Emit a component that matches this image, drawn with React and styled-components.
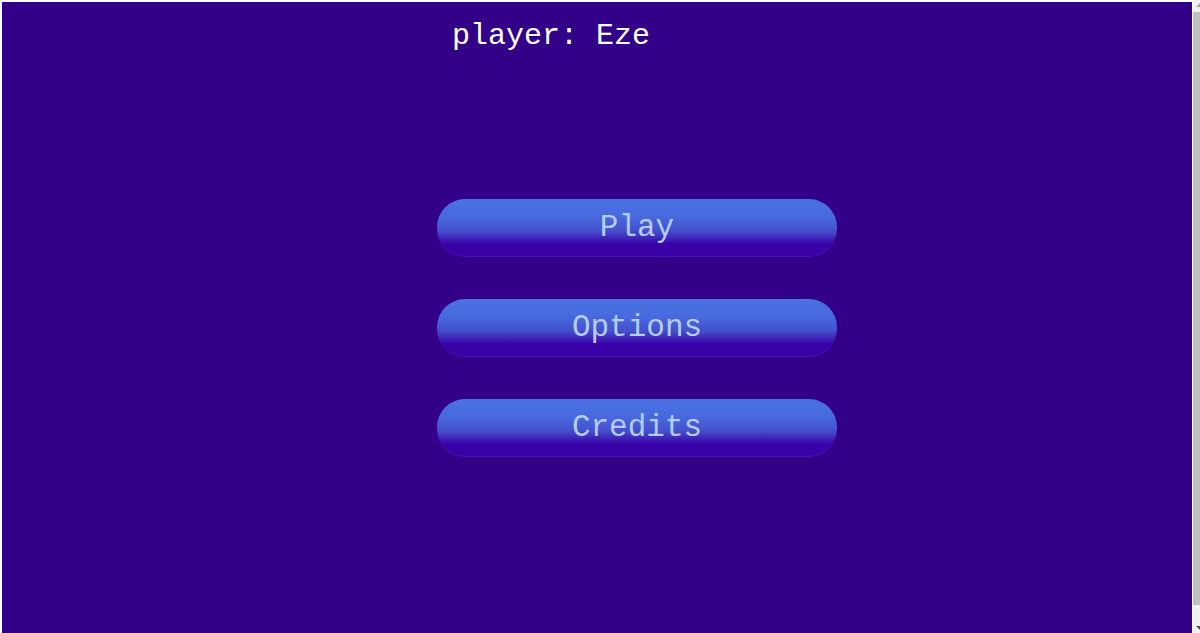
import React from "react";
import styled, { createGlobalStyle } from "styled-components";

const Global = createGlobalStyle`
  html, body { background: #ffffff; }
  body {
    margin: 2px 8px 0 2px;
    font-family: "Liberation Mono", "Courier New", monospace;
    overflow: hidden;
  }
`;

const Screen = styled.div`
  background: #330088;
  height: calc(100vh - 2px);
  display: flex;
  flex-direction: column;
`;

const Header = styled.header`
  padding: 16px 0 0 450px;
  height: 40px;
`;

const PlayerName = styled.span`
  color: #ffffff;
  font-family: "Liberation Mono", "Courier New", monospace;
  font-size: 30px;
  line-height: 36px;
`;

const Menu = styled.nav`
  display: flex;
  flex-direction: column;
  gap: 42px;
  padding: 141px 0 0 435px;
`;

const MenuButton = styled.button`
  width: 400px;
  height: 58px;
  border: none;
  border-radius: 28px;
  padding: 0;
  background: linear-gradient(
    to bottom,
    #4a72e2 0%,
    #486ade 30%,
    #4450cc 55%,
    #3a00a8 78%,
    #3800a4 100%
  );
  box-shadow: inset 0 -1px 0 #4a10b8;
  color: #b4ccff;
  font-family: "Liberation Mono", "Courier New", monospace;
  font-size: 31px;
  line-height: 58px;
  text-align: center;
  cursor: pointer;
`;

const ScrollTrack = styled.div`
  position: fixed;
  top: 0;
  right: 0;
  bottom: 0;
  width: 7px;
  background: #f1f1f1;
  display: flex;
  flex-direction: column;
  align-items: stretch;
`;

const ScrollArrow = styled.div`
  height: 10px;
  position: relative;
  &::after {
    content: "";
    position: absolute;
    left: 3px;
    ${(p) => (p.$down ? "bottom: 3px;" : "top: 3px;")}
    border-left: 4px solid transparent;
    border-right: 4px solid transparent;
    ${(p) =>
      p.$down ? "border-top: 4px solid #505050;" : "border-bottom: 4px solid #a3a3a3;"}
  }
`;

const ScrollThumb = styled.div`
  flex: 1;
  margin: 2px 0 18px;
  background: #c1c1c1;
`;

export default function App() {
  return (
    <>
      <Global />
      <Screen>
        <Header>
          <PlayerName>player: Eze</PlayerName>
        </Header>
        <Menu>
          <MenuButton>Play</MenuButton>
          <MenuButton>Options</MenuButton>
          <MenuButton>Credits</MenuButton>
        </Menu>
      </Screen>
      <ScrollTrack>
        <ScrollArrow />
        <ScrollThumb />
        <ScrollArrow $down />
      </ScrollTrack>
    </>
  );
}
